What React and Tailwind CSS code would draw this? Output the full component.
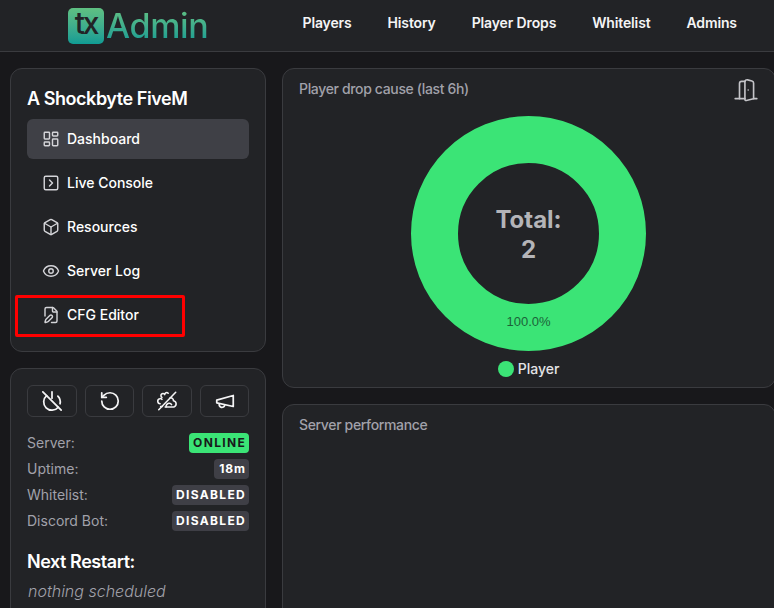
import { LayoutDashboard, SquareChevronRight, Box, Eye, FilePen, RotateCcw, DoorOpen } from 'lucide-react';

const navLinks = ['Players', 'History', 'Player Drops', 'Whitelist', 'Admins'];

const menu = [
  { label: 'Dashboard', Icon: LayoutDashboard, active: true },
  { label: 'Live Console', Icon: SquareChevronRight },
  { label: 'Resources', Icon: Box },
  { label: 'Server Log', Icon: Eye },
  { label: 'CFG Editor', Icon: FilePen },
];

const statusRows = [
  { label: 'Server:', value: 'ONLINE', cls: 'bg-[#3be476] text-[#18181b] tracking-[0.11em]' },
  { label: 'Uptime:', value: '18m', cls: 'bg-[#3f3f46] text-white tracking-[0.08em] pl-[5px]' },
  { label: 'Whitelist:', value: 'DISABLED', cls: 'bg-[#3f3f46] text-white tracking-[0.11em]' },
  { label: 'Discord Bot:', value: 'DISABLED', cls: 'bg-[#3f3f46] text-white tracking-[0.11em]' },
];

function PowerOffIcon() {
  return (
    <svg viewBox="0 0 24 24" className="w-[22px] h-[22px]" fill="none" stroke="#f4f4f5" strokeWidth="1.9" strokeLinecap="round" strokeLinejoin="round">
      <path d="M18.36 6.64A9 9 0 0 1 20.77 15" />
      <path d="M6.16 6.16a9 9 0 1 0 12.68 12.68" />
      <path d="M12 2v7" />
      <path d="m2 2 20 20" />
    </svg>
  );
}

// cloud with swirls, crossed out
function KickAllIcon() {
  return (
    <svg viewBox="0 0 24 24" className="w-[22px] h-[22px]" fill="none" stroke="#f4f4f5" strokeWidth="1.7" strokeLinecap="round" strokeLinejoin="round">
      <path d="M21.500 2.500 3 21.500" />
      <path d="M6.500 8a2.200 2.200 0 1 1 3-3 2.200 2.200 0 0 1 3.800-1.500" />
      <path d="M4.500 15a2.800 2.800 0 0 1-.5-5.500c1-.3 2 0 2.500.8" />
      <path d="M5 18h2" />
      <path d="M15.500 8.500a3 3 0 0 1 3.500 3.200 3.500 3.500 0 0 1 .5 6.800c-.3.100-.6.100-1 .1H10" />
      <path d="M11 18.500a3.500 3.500 0 0 1 3.500-4 3 3 0 0 1 2.500 1.500" />
    </svg>
  );
}

function MegaphoneOldIcon() {
  return (
    <svg viewBox="0 0 24 24" className="w-[22px] h-[22px]" fill="none" stroke="#f4f4f5" strokeWidth="1.9" strokeLinecap="round" strokeLinejoin="round">
      <path d="m3 11 18-5v12L3 14v-3z" />
      <path d="M11.600 16.800a3 3 0 1 1-5.800-1.600" />
    </svg>
  );
}

function Logo() {
  return (
    <div className="flex items-center gap-0.5">
      <div className="w-9 h-9 rounded-[5px] bg-gradient-to-b from-[#5fc082] to-[#0e9c94] flex items-center justify-center">
        <span className="text-[30px] leading-none font-medium text-[#222326] tracking-[-0.07em] -mt-[5px]">tx</span>
      </div>
      <span className="text-[34px] leading-none font-medium tracking-[-0.01em] bg-gradient-to-b from-[#5fc082] to-[#0e9c94] bg-clip-text text-transparent">Admin</span>
    </div>
  );
}

export default function App() {
  return (
    <div className="h-[608px] overflow-hidden bg-[#18181b] text-white font-['Inter',sans-serif]">
      <header className="h-[52px] bg-[#222326] border-b border-[#3a3b3f] flex items-center pb-[5px]">
        <div className="w-[284px] flex mt-[5px] shrink-0 pl-[68px]"><Logo /></div>
        <nav className="flex gap-9 ml-[18.5px] text-sm font-semibold text-[#f4f4f5] tracking-[-0.01em]">
          {navLinks.map((l) => <span key={l} className="whitespace-nowrap">{l}</span>)}
        </nav>
      </header>

      <div className="flex gap-4 px-[10px] pt-4 w-[786px]">
        <aside className="w-[256px] shrink-0 flex flex-col gap-4">
          <div className="bg-[#222326] border border-[#3a3b3f] rounded-xl px-4 pt-[18px] h-[284px]">
            <h2 className="text-lg leading-6 font-semibold tracking-tight mb-2">A Shockbyte FiveM</h2>
            <div className="flex flex-col gap-1">
              {menu.map(({ label, Icon, active }) => (
                <div key={label} className={`h-10 rounded-md flex items-center gap-[7px] px-[15px] text-sm font-medium ${active ? 'bg-[#3f4046]' : ''}`}>
                  <Icon className="w-[18px] h-[18px] text-[#d4d4d8]" strokeWidth={1.9} />
                  <span>{label}</span>
                </div>
              ))}
            </div>
          </div>

          <div className="bg-[#222326] border border-[#3a3b3f] rounded-xl px-4 pt-4 h-[300px]">
            <div className="flex justify-between">
              <div className="w-[50px] h-8 rounded-md border border-[#3a3b3f] flex items-center justify-center"><PowerOffIcon /></div>
              <div className="w-[49px] h-8 rounded-md border border-[#3a3b3f] flex items-center justify-center"><RotateCcw className="w-[22px] h-[22px] text-[#f4f4f5]" strokeWidth={1.9} /></div>
              <div className="w-[50px] h-8 rounded-md border border-[#3a3b3f] flex items-center justify-center"><KickAllIcon /></div>
              <div className="w-[49px] h-8 rounded-md border border-[#3a3b3f] flex items-center justify-center"><MegaphoneOldIcon /></div>
            </div>
            <div className="mt-4 flex flex-col gap-1.5">
              {statusRows.map((r) => (
                <div key={r.label} className="h-5 flex items-center justify-between text-sm text-[#a1a1aa]">
                  <span>{r.label}</span>
                  <span className={`h-5 rounded pl-1 pr-[3px] flex items-center text-xs font-bold ${r.cls}`}>{r.value}</span>
                </div>
              ))}
            </div>
            <h3 className="mt-[19px] text-lg leading-6 font-semibold tracking-tight">Next Restart:</h3>
            <p className="mt-[5px] text-base font-light italic text-[#a1a1aa] pl-px">nothing scheduled</p>
          </div>
        </aside>

        <main className="flex-1 flex flex-col gap-4 min-w-0">
          <section className="relative h-[320px] bg-[#222326] border border-[#3a3b3f] rounded-xl">
            <h3 className="absolute left-4 top-[10px] text-sm font-medium tracking-[-0.025em] text-[#a1a1aa]">Player drop cause (last 6h)</h3>
            <DoorOpen className="absolute right-[16px] top-[8px] w-[26px] h-[26px] text-[#c4c4c8]" strokeWidth={1.5} />
            <div className="flex flex-col items-center pt-[47px] w-[491px]">
              <div className="w-[235px] h-[235px] rounded-full border-[47px] border-[#3be476] flex flex-col items-center justify-center text-[#b4b4b8] text-2xl font-bold leading-[30px] pt-0.5 relative">
                <span>Total:</span>
                <span>2</span>
                <span className="absolute bottom-[-33px] text-[13px] font-normal font-['Liberation_Sans',sans-serif] text-[#1c6339]">100.0%</span>
              </div>
              <div className="mt-2 flex items-center gap-1 text-sm font-medium text-[#e4e4e7]">
                <span className="w-4 h-4 rounded-full bg-[#3be476]" />
                Player
              </div>
            </div>
          </section>
          <section className="h-[240px] bg-[#222326] border border-[#3a3b3f] rounded-xl px-4 pt-[10px]">
            <h3 className="text-sm font-medium tracking-[-0.025em] text-[#a1a1aa]">Server performance</h3>
          </section>
        </main>
      </div>

      <div className="absolute left-[15px] top-[295px] w-[170px] h-[42px] border-[3px] border-[#ff0000] rounded-[2px] pointer-events-none" />
    </div>
  );
}
